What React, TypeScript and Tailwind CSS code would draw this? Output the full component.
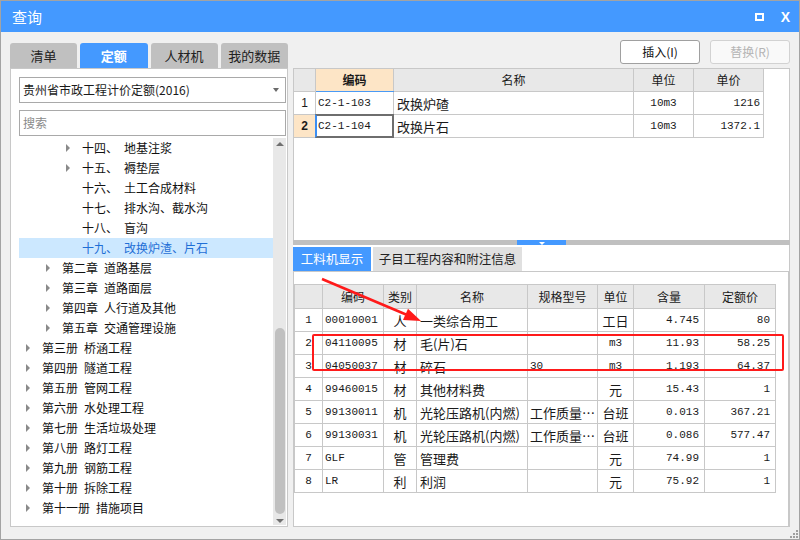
import React from "react";

const tabs = [
  { label: "清单", active: false },
  { label: "定额", active: true },
  { label: "人材机", active: false },
  { label: "我的数据", active: false },
];

const tree = [
  { level: 3, label: "十四、", name: "地基注浆", arrow: true },
  { level: 3, label: "十五、", name: "褥垫层", arrow: true },
  { level: 3, label: "十六、", name: "土工合成材料", arrow: false },
  { level: 3, label: "十七、", name: "排水沟、截水沟", arrow: false },
  { level: 3, label: "十八、", name: "盲沟", arrow: false },
  { level: 3, label: "十九、", name: "改换炉渣、片石", arrow: false, selected: true },
  { level: 2, label: "第二章", name: "道路基层", arrow: true },
  { level: 2, label: "第三章", name: "道路面层", arrow: true },
  { level: 2, label: "第四章", name: "人行道及其他", arrow: true },
  { level: 2, label: "第五章", name: "交通管理设施", arrow: true },
  { level: 1, label: "第三册", name: "桥涵工程", arrow: true },
  { level: 1, label: "第四册", name: "隧道工程", arrow: true },
  { level: 1, label: "第五册", name: "管网工程", arrow: true },
  { level: 1, label: "第六册", name: "水处理工程", arrow: true },
  { level: 1, label: "第七册", name: "生活垃圾处理", arrow: true },
  { level: 1, label: "第八册", name: "路灯工程", arrow: true },
  { level: 1, label: "第九册", name: "钢筋工程", arrow: true },
  { level: 1, label: "第十册", name: "拆除工程", arrow: true },
  { level: 1, label: "第十一册", name: "措施项目", arrow: true },
];

const levelPad: Record<number, string> = {
  1: "pl-[7px]",
  2: "pl-[27px]",
  3: "pl-[47px]",
};

const topRows = [
  { no: "1", code: "C2-1-103", name: "改换炉碴", unit: "10m3", price: "1216" },
  { no: "2", code: "C2-1-104", name: "改换片石", unit: "10m3", price: "1372.1", active: true },
];

const items = [
  { no: "1", code: "00010001", kind: "人", name: "一类综合用工", spec: "", unit: "工日", qty: "4.745", price: "80" },
  { no: "2", code: "04110095", kind: "材", name: "毛(片)石", spec: "", unit: "m3", qty: "11.93", price: "58.25" },
  { no: "3", code: "04050037", kind: "材", name: "碎石", spec: "30", unit: "m3", qty: "1.193", price: "64.37" },
  { no: "4", code: "99460015", kind: "材", name: "其他材料费", spec: "", unit: "元", qty: "15.43", price: "1" },
  { no: "5", code: "99130011", kind: "机", name: "光轮压路机(内燃)", spec: "工作质量…", unit: "台班", qty: "0.013", price: "367.21" },
  { no: "6", code: "99130031", kind: "机", name: "光轮压路机(内燃)", spec: "工作质量…", unit: "台班", qty: "0.086", price: "577.47" },
  { no: "7", code: "GLF", kind: "管", name: "管理费", spec: "", unit: "元", qty: "74.99", price: "1" },
  { no: "8", code: "LR", kind: "利", name: "利润", spec: "", unit: "元", qty: "75.92", price: "1" },
];

const mono = "font-['Liberation_Mono',monospace] text-[11px]";
const cell = "border border-[#c8c8c8] p-0";

function Caret() {
  return (
    <span className="inline-block h-0 w-0 border-y-[4px] border-l-[4px] border-y-transparent border-l-[#8a8a8a]" />
  );
}

export default function App() {
  return (
    <div className="relative h-[540px] w-[800px] overflow-hidden border border-[#a3a3a3] bg-[#f0f0f0] font-['Noto_Sans_CJK_SC',sans-serif] text-[12px] leading-none text-[#1a1a1a]">
      {/* TITLE BAR */}
      <div className="flex h-[31px] items-center bg-[#4499ff] pl-[11px] pr-[9px] text-white">
        <span className="text-[15px]">查询</span>
        <div className="ml-auto flex items-center gap-[17px]">
          <span className="h-[8px] w-[9px] border-2 border-white" />
          <span className="font-['Liberation_Sans',sans-serif] text-[14px] font-bold">X</span>
        </div>
      </div>

      <div className="flex pl-[9px]">
        {/* LEFT COLUMN */}
        <div className="w-[278px] pt-[11px]">
          <div className="flex h-[25px] gap-[3px]">
            {tabs.map((tab) => (
              <div
                key={tab.label}
                className={`flex w-[77px] items-center justify-center rounded-t-[3px] text-[13px] ${
                  tab.active ? "bg-[#4499ff] font-bold text-white" : "bg-[#c0c0c0] text-[#222]"
                }`}
              >
                {tab.label}
              </div>
            ))}
          </div>

          <div className="h-[459px] border border-[#c8c8c8] bg-white pl-[8px] pr-[1px] pt-[8px]">
            <div className="flex h-[26px] items-center border border-[#a9a9a9] pl-[3px] pr-[6px]">
              <span>贵州省市政工程计价定额(2016)</span>
              <span className="ml-auto h-0 w-0 border-x-[3px] border-t-[4px] border-x-transparent border-t-[#6a6a6a]" />
            </div>
            <div className="mt-[7px] flex h-[26px] items-center border border-[#a9a9a9] pl-[3px] text-[#8a8a8a]">
              搜索
            </div>

            <div className="mt-[2px] flex h-[387px]">
              <div className="flex-1 overflow-hidden">
                {tree.map((row) => (
                  <div
                    key={row.label}
                    className={`flex h-[20px] items-center ${levelPad[row.level]} ${
                      row.selected ? "bg-[#cce8ff] text-[#1f6fd6]" : "text-[#111]"
                    }`}
                  >
                    <span className="flex w-[16px] items-center">{row.arrow && <Caret />}</span>
                    <span>{row.label}</span>
                    <span className="ml-[6px]">{row.name}</span>
                  </div>
                ))}
              </div>
              <div className="flex w-[13px] flex-col items-center bg-[#e8e8e8]">
                <span className="mt-[4px] h-0 w-0 border-x-[4px] border-b-[4px] border-x-transparent border-b-[#707070]" />
                <span className="mt-[182px] h-[186px] w-[10px] rounded-full bg-[#c0c0c0]" />
                <span className="mt-[5px] h-0 w-0 border-x-[4px] border-t-[4px] border-x-transparent border-t-[#707070]" />
              </div>
            </div>
          </div>
        </div>

        {/* RIGHT COLUMN */}
        <div className="ml-[5px] w-[497px] pt-[8px]">
          <div className="flex h-[24px] justify-end gap-[10px]">
            <button
              type="button"
              className="w-[80px] rounded-[3px] border border-[#a0a0a0] bg-white text-[12px] text-[#111]"
            >
              插入(I)
            </button>
            <button
              type="button"
              className="w-[80px] rounded-[3px] border border-[#d2d2d2] bg-[#f9f9f9] text-[12px] text-[#b4b4b4]"
            >
              替换(R)
            </button>
          </div>

          <div className="mt-[4px]">
            {/* top table area */}
            <div className="h-[172px] border-x border-t border-[#c8c8c8] bg-white">
              <table className="-ml-px -mt-px table-fixed border-collapse">
                <colgroup>
                  <col className="w-[22px]" />
                  <col className="w-[78px]" />
                  <col className="w-[240px]" />
                  <col className="w-[60px]" />
                  <col className="w-[70px]" />
                </colgroup>
                <thead>
                  <tr className="h-[23px]">
                    <th className={`${cell} bg-[#e8e8e8]`} />
                    <th className={`${cell} border-b-[#4a9af5] bg-[#fde5c6] font-bold`}>编码</th>
                    <th className={`${cell} bg-[#e8e8e8] font-normal`}>名称</th>
                    <th className={`${cell} bg-[#e8e8e8] font-normal`}>单位</th>
                    <th className={`${cell} bg-[#e8e8e8] font-normal`}>单价</th>
                  </tr>
                </thead>
                <tbody>
                  {topRows.map((row) => (
                    <tr key={row.no} className="h-[23px]">
                      <td
                        className={`${cell} text-center ${
                          row.active ? "bg-[#fde5c6] font-bold" : ""
                        } font-['Liberation_Sans',sans-serif] text-[12px]`}
                      >
                        {row.no}
                      </td>
                      <td className={`${cell} relative pl-[2px] ${mono}`}>
                        {row.code}
                        {row.active && (
                          <span className="absolute inset-[-1px] border-2 border-[#6e6e6e] border-l-[#3b8ef3]" />
                        )}
                      </td>
                      <td className={`${cell} pl-[3px] text-[13px]`}>{row.name}</td>
                      <td className={`${cell} text-center ${mono}`}>{row.unit}</td>
                      <td className={`${cell} pr-[3px] text-right ${mono}`}>{row.price}</td>
                    </tr>
                  ))}
                </tbody>
              </table>
            </div>

            {/* splitter */}
            <div className="flex h-[5px] justify-center bg-[#c0c0c0]">
              <div className="flex w-[49px] items-end justify-center bg-[#4499ff]">
                <span className="h-0 w-0 border-x-[3px] border-t-[3px] border-x-transparent border-t-white" />
              </div>
            </div>

            {/* lower area */}
            <div className="h-[282px] border-r border-[#c8c8c8] bg-white pt-[2px]">
              <div className="flex h-[24px] gap-[2px]">
                <div className="flex w-[78px] items-center justify-center bg-[#4499ff] text-[12.5px] text-white">
                  工料机显示
                </div>
                <div className="flex w-[149px] items-center justify-center bg-[#e0e0e0] text-[12.5px] text-[#222]">
                  子目工程内容和附注信息
                </div>
              </div>

              <div className="h-[256px] border border-[#c8c8c8] bg-white pt-[12px]">
                <table className="table-fixed border-collapse">
                  <colgroup>
                    <col className="w-[28px]" />
                    <col className="w-[61px]" />
                    <col className="w-[33px]" />
                    <col className="w-[111px]" />
                    <col className="w-[70px]" />
                    <col className="w-[36px]" />
                    <col className="w-[71px]" />
                    <col className="w-[71px]" />
                  </colgroup>
                  <thead>
                    <tr className="h-[24px] bg-[#e8e8e8]">
                      <th className={cell} />
                      <th className={`${cell} font-normal`}>编码</th>
                      <th className={`${cell} font-normal`}>类别</th>
                      <th className={`${cell} font-normal`}>名称</th>
                      <th className={`${cell} font-normal`}>规格型号</th>
                      <th className={`${cell} font-normal`}>单位</th>
                      <th className={`${cell} font-normal`}>含量</th>
                      <th className={`${cell} font-normal`}>定额价</th>
                    </tr>
                  </thead>
                  <tbody>
                    {items.map((item) => (
                      <tr key={item.no} className="h-[23px]">
                        <td className={`${cell} text-center ${mono}`}>{item.no}</td>
                        <td className={`${cell} pl-[2px] ${mono}`}>{item.code}</td>
                        <td className={`${cell} text-center text-[13px]`}>{item.kind}</td>
                        <td className={`${cell} whitespace-nowrap pl-[3px] text-[13px]`}>{item.name}</td>
                        <td
                          className={`${cell} whitespace-nowrap pl-[2px] ${
                            item.spec === "30" ? mono : "text-[13px]"
                          }`}
                        >
                          {item.spec}
                        </td>
                        <td className={`${cell} text-center ${item.unit === "m3" ? mono : "text-[13px]"}`}>
                          {item.unit}
                        </td>
                        <td className={`${cell} pr-[5px] text-right ${mono}`}>{item.qty}</td>
                        <td className={`${cell} pr-[5px] text-right ${mono}`}>{item.price}</td>
                      </tr>
                    ))}
                  </tbody>
                </table>
              </div>
            </div>
          </div>
        </div>
      </div>

      {/* annotation: red highlight and arrow */}
      <svg
        className="pointer-events-none absolute -left-px -top-px"
        width="800"
        height="540"
        viewBox="0 0 800 540"
      >
        <rect x="313" y="335" width="470" height="35" fill="none" stroke="#ff1a1a" strokeWidth="2" rx="1" />
        <line x1="322" y1="279" x2="406" y2="314.5" stroke="#ff1a1a" strokeWidth="2.5" />
        <polygon points="421,321 403,320 408,308.8" fill="#ff1a1a" />
      </svg>

      {/* resize grip */}
      <svg className="absolute bottom-px right-px" width="8" height="8" viewBox="0 0 8 8">
        <rect x="6" y="0" width="2" height="2" fill="#a0a0a0" />
        <rect x="3" y="3" width="2" height="2" fill="#a0a0a0" />
        <rect x="6" y="3" width="2" height="2" fill="#a0a0a0" />
        <rect x="0" y="6" width="2" height="2" fill="#a0a0a0" />
        <rect x="3" y="6" width="2" height="2" fill="#a0a0a0" />
        <rect x="6" y="6" width="2" height="2" fill="#a0a0a0" />
      </svg>
    </div>
  );
}
